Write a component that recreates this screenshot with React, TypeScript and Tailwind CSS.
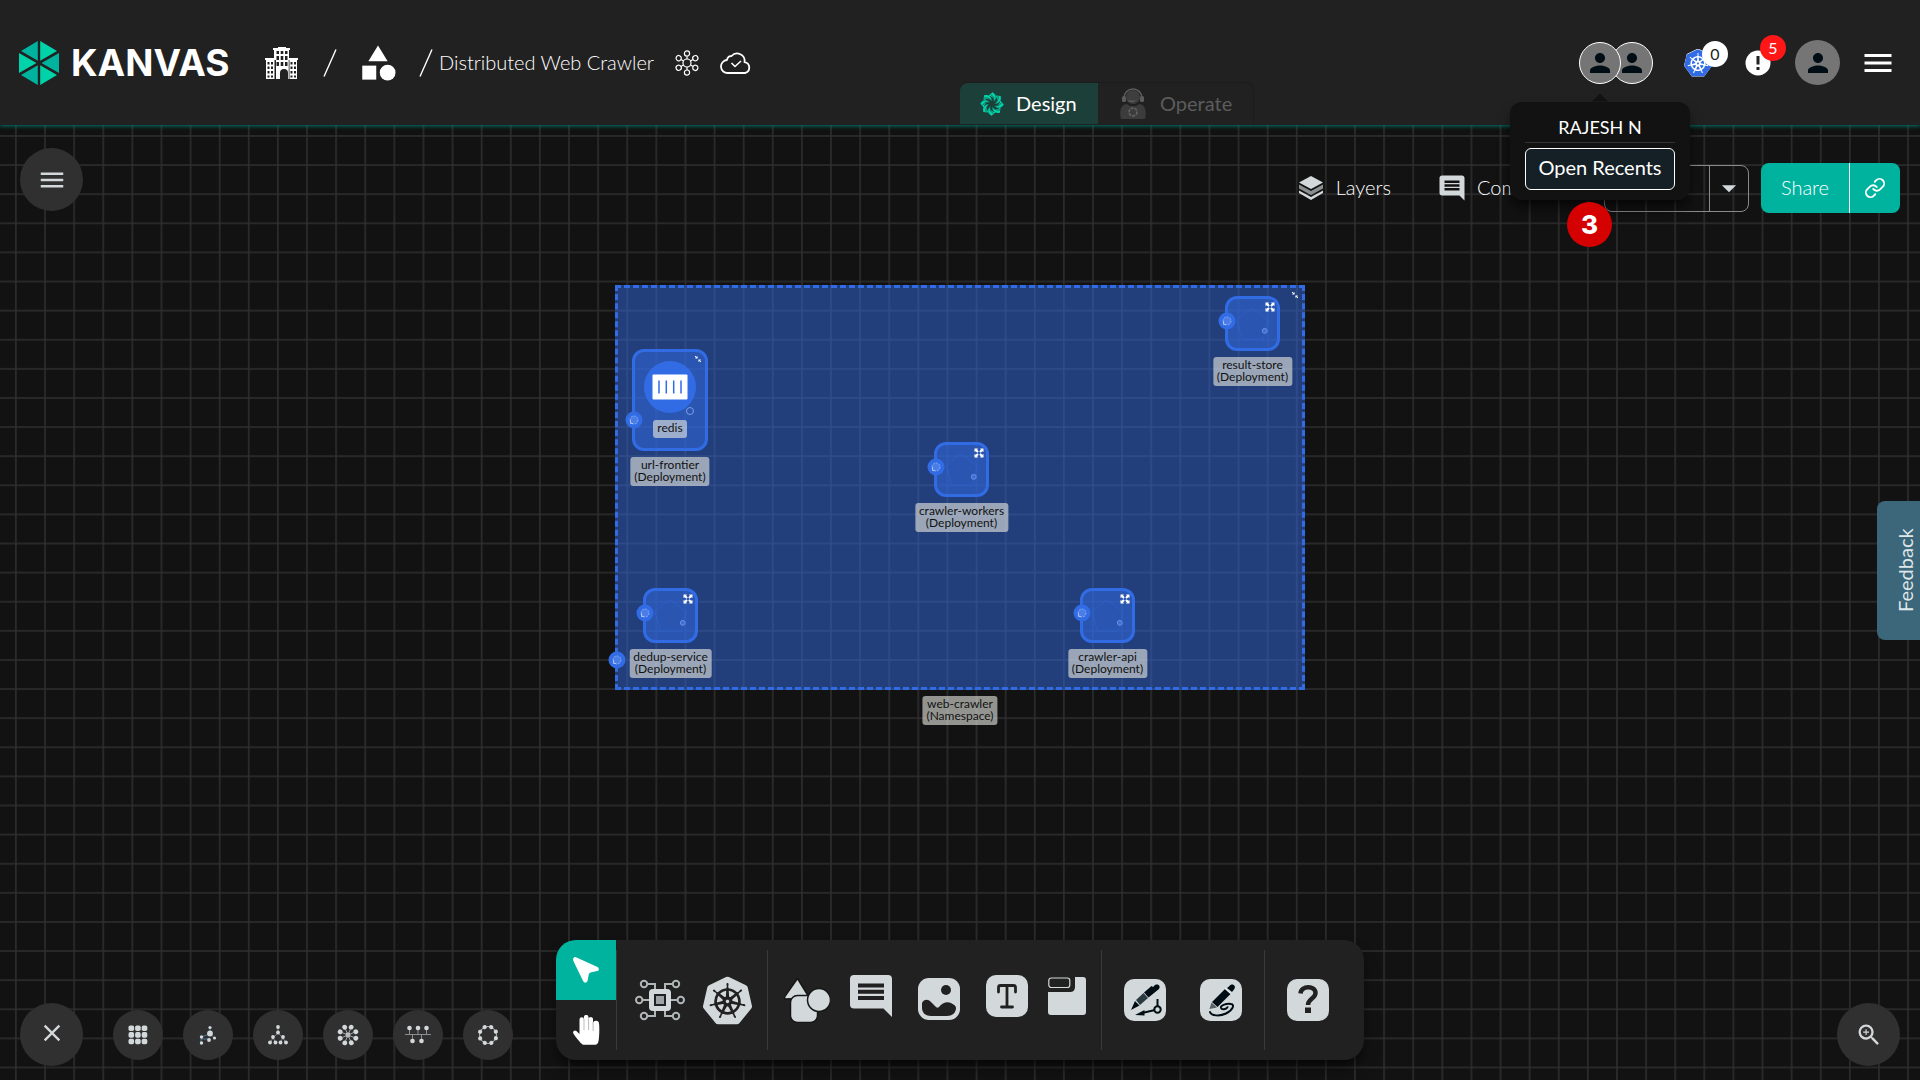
import type { ReactNode } from 'react';
import {
  MdArrowDropDown,
  MdCategory,
  MdClose,
  MdInsertComment,
  MdMenu,
  MdPerson,
  MdZoomIn,
} from 'react-icons/md';
import { SiKubernetes } from 'react-icons/si';
import { Link } from 'lucide-react';

interface DesignNode {
  name: string;
  left: number;
  top: number;
}

// positions are relative to the namespace box
const deployments: DesignNode[] = [
  { name: 'result-store', left: 610, top: 11 },
  { name: 'crawler-workers', left: 319, top: 157 },
  { name: 'dedup-service', left: 28, top: 303 },
  { name: 'crawler-api', left: 465, top: 303 },
];

const KanvasMark = () => (
  <svg viewBox="0 0 40 44" className="w-10 h-11" aria-hidden="true">
    <path fill="#00b39f" d="M18.8 0 2 10l16.800 9.700zM40 12v20L22.500 22zM18.800 44 2 34l16.800-9.700z" />
    <path fill="#00d3a9" d="M21.200 0 38 10l-16.800 9.700zM0 12v20l17.500-10zM21.200 44 38 34l-16.800-9.700z" />
  </svg>
);

const BuildingIcon = () => (
  <svg viewBox="0 0 36 34" className="w-9 h-[34px]" aria-hidden="true">
    <path
      fill="#fff"
      fillRule="evenodd"
      d="M14 1h8v1h4v2h-1v8h9v2h-1v19h-9v-6a3 3 0 0 0-8 0v6h-4V14H1v-2h9V4H9V2h5zM12.500 5v3h2.500V5zm4.200 0v3h2.600V5zm4.300 0v3h2.500V5zM12.500 10v4h2.500v-4zm4.200 0v4h2.600v-4zm4.300 0v4h2.500v-4zM12.500 16v4h2.500v-4zm4.200 0v4h2.600v-4zm4.300 0v4h2.500v-4z"
    />
    <path fill="#fff" fillRule="evenodd" d="M2 14h9v19H2zm1.500 2v2.500h2V16zm3.500 0v2.500h2V16zm-3.500 4.500V23h2v-2.500zm3.500 0V23h2v-2.500zM3.500 25v2.500h2V25zM7 25v2.500h2V25zm-3.500 4.500v2h2v-2zm3.500 0v2h2v-2z" />
    <path fill="#212121" d="M26.500 16h2v2.500h-2zm3.500 0h2v2.500h-2zm-3.500 4.500h2V23h-2zm3.500 0h2V23h-2zM26.500 25h2v2.500h-2zm3.500 0h2v2.500h-2zm-3.500 4.500h2v2h-2zm3.500 0h2v2h-2zM10.500 14h.8v19h-.8zM24.700 14h.8v19h-.8z" />
  </svg>
);

const Slash = () => (
  <svg viewBox="0 0 14 28" className="w-3.5 h-7" aria-hidden="true">
    <path d="M1 27.500 13 .5" stroke="#fff" strokeWidth="1.400" />
  </svg>
);

const hubAngles = [0, 60, 120, 180, 240, 300];

const HubIcon = () => (
  <svg viewBox="0 0 26 26" className="w-[26px] h-[26px]" fill="none" stroke="#fff" strokeWidth="1.200" aria-hidden="true">
    <circle cx="13" cy="13" r="4" />
    {hubAngles.map((a) => (
      <g key={a} transform={`rotate(${a} 13 13)`}>
        <circle cx="13" cy="3.400" r="2.600" />
        <path d="M13 6v3" />
      </g>
    ))}
  </svg>
);

const CloudCheckIcon = () => (
  <svg viewBox="0 0 32 22" className="w-8 h-[22px]" fill="none" stroke="#fff" strokeWidth="1.800" strokeLinejoin="round" aria-hidden="true">
    <path d="M8 21a6.500 6.500 0 0 1-1-13 5 5 0 0 1 2-3.500C10 4 10.500 4 11.500 4a7.500 7.500 0 0 1 13 6.200A5.500 5.500 0 0 1 25 21z" />
    <path d="m11.500 11 3.500 3.500L21 9" strokeWidth="1.600" />
  </svg>
);

const bladeAngles = [0, 45, 90, 135, 180, 225, 270, 315];

const SwirlIcon = () => (
  <svg viewBox="0 0 24 24" className="w-6 h-6" aria-hidden="true">
    {bladeAngles.map((a) => (
      <g key={a} transform={`rotate(${a} 12 12)`}>
        <path fill="#00d3a9" d="M13.500 10C14.500 7 13 4.500 8.500 3.500L12.500.3C16.500 2.500 17 7 13.500 10z" />
        <path fill="none" stroke="#1d3f3a" strokeWidth=".7" d="M12 12C15 9 14.500 5 10.500 2.200" />
      </g>
    ))}
  </svg>
);

const OperatorIcon = () => (
  <svg viewBox="0 0 26 32" className="w-[26px] h-8" aria-hidden="true">
    <path d="M4 10a9 9 0 0 1 18 0" fill="none" stroke="#5c5c5c" strokeWidth="1.500" />
    <circle cx="13" cy="9" r="7" fill="#3e3e3e" />
    <rect x="2" y="8" width="4" height="6" rx="1.500" fill="#5c5c5c" />
    <rect x="20" y="8" width="4" height="6" rx="1.500" fill="#5c5c5c" />
    <path d="M7 12.500h9a7 7 0 0 1-9 0z" fill="#5c5c5c" />
    <path d="M1 31c-2-8 0-15 6-15 3 3 9 3 12 0 6 0 8 7 6 15z" fill="#3c3c3c" />
    <circle cx="13" cy="24" r="4" fill="none" stroke="#666" strokeWidth="1.500" strokeDasharray="3 1" />
  </svg>
);

const AlertIcon = () => (
  <svg viewBox="0 0 26 26" className="w-[26px] h-[26px]" aria-hidden="true">
    <circle cx="13" cy="13" r="12.500" fill="#fff" />
    <path d="M11.500 6h3v8.500h-3zM11.500 17h3v3h-3z" fill="#212121" />
  </svg>
);

const LayersIcon = () => (
  <svg viewBox="0 0 26 26" className="w-[26px] h-[26px]" aria-hidden="true">
    <path fill="#d3d9db" d="m13 1 12 6.500-12 6.500L1 7.500z" />
    <path fill="#8b8f91" d="M1 9.500 13 16l12-6.500v4L13 20 1 13.500z" />
    <path fill="#d3d9db" d="M1 15.500 13 22l12-6.500V18l-12 7-12-7z" />
  </svg>
);

const CursorIcon = () => (
  <svg viewBox="0 0 26 26" className="w-[26px] h-[26px]" aria-hidden="true">
    <path fill="#fff" d="M3.500.4 24 9.800c2.500 1.200 2.400 3.800-.1 4.300l-6.200 1.300c-1 .2-1.700.9-1.900 1.800l-1.200 6.300c-.6 2.600-3.300 3-4.500.5L.5 4.300C-.7 1.500 1-.7 3.500.4z" />
  </svg>
);

const HandIcon = () => (
  <svg viewBox="0 0 27 30" className="w-[27px] h-[30px]" aria-hidden="true">
    <path
      fill="#fff"
      d="M6.500 19V4.500a2.200 2.200 0 0 1 4.400 0V2.200a2.300 2.300 0 0 1 4.600 0v1.500a2.300 2.300 0 0 1 4.500 0V9a2.700 2.700 0 0 1 6-.3c.5 1.500.5 15-.8 18.500-.5 1.500-1.400 2.500-3 2.500H10.500C8.500 29.700 3 22.500.4 18.500c-1.200-2 1.200-4 3-2.500z"
    />
    <path stroke="#bbb" strokeWidth="1" d="M11 4v11M15.600 4v11M20.100 7v9" />
  </svg>
);

const CircuitIcon = () => (
  <svg viewBox="0 0 50 42" className="w-[50px] h-[42px]" fill="none" aria-hidden="true">
    <g stroke="#b1b6b8" strokeWidth="2">
      <path d="M20 10V5h-7.500M30 10V5h7.500M20 32v5h-7.500M30 32v5h7.500M14 21H7M36 21h7" />
      <circle cx="9" cy="5" r="3.200" />
      <circle cx="41" cy="5" r="3.200" />
      <circle cx="9" cy="37" r="3.200" />
      <circle cx="41" cy="37" r="3.200" />
      <circle cx="4.200" cy="21" r="3.200" />
      <circle cx="45.800" cy="21" r="3.200" />
    </g>
    <rect x="14" y="10" width="22" height="22" rx="4" fill="#d3d9db" />
    <rect x="20" y="16" width="10" height="10" fill="#9fa3a5" stroke="#212121" strokeWidth="2" />
  </svg>
);

const ShapesIcon = () => (
  <svg viewBox="0 0 46 46" className="w-[46px] h-[46px]" fill="#d3d9db" stroke="#161616" strokeWidth="1.500" aria-hidden="true">
    <path d="M13.500 1.500 25.500 21l-24 1c-2-1-.5-2.500 0-3.500z" strokeLinejoin="round" />
    <rect x="6.500" y="18.500" width="27" height="27" rx="7" />
    <circle cx="35" cy="23" r="11.500" />
  </svg>
);

const CommentIcon = () => (
  <svg viewBox="0 0 42 42" className="w-[42px] h-[42px]" aria-hidden="true">
    <path fill="#d3d9db" d="M4 0h34a4 4 0 0 1 4 4v38l-8.500-8.500H4a4 4 0 0 1-4-4V4a4 4 0 0 1 4-4z" />
    <path fill="#212121" d="M8 8.500h26v4H8zM8 14.800h26v4H8zM8 21h26v4H8z" />
  </svg>
);

const ImageIcon = () => (
  <svg viewBox="0 0 42 42" className="w-[42px] h-[42px]" aria-hidden="true">
    <rect width="42" height="42" rx="11" fill="#d3d9db" />
    <circle cx="28" cy="12" r="5" fill="#212121" />
    <path fill="#212121" d="M4 25c2-4 6-4 9-1l5 5c1 1 2 1 3 0 3-4 8-6 12-4 3 1.500 5 3 5 5 0 5-4 8-9 8H13c-5 0-9-3-9-8z" />
  </svg>
);

const TextIcon = () => (
  <svg viewBox="0 0 42 42" className="w-[42px] h-[42px]" aria-hidden="true">
    <rect width="42" height="42" rx="10" fill="#d3d9db" />
    <path d="M12.500 17v-4.500q0-2 2-2h13q2 0 2 2V17M21 11v21M15.500 32h11" fill="none" stroke="#212121" strokeWidth="2.800" strokeLinecap="round" />
  </svg>
);

const SectionIcon = () => (
  <svg viewBox="0 0 38 38" className="w-[38px] h-[38px]" aria-hidden="true">
    <path fill="#d3d9db" d="M27 0h8a3 3 0 0 1 3 3v32a3 3 0 0 1-3 3H3a3 3 0 0 1-3-3V15h22q5 0 5-5z" />
    <rect x=".8" y="1" width="21" height="9.500" rx="2.500" fill="#212121" stroke="#d3d9db" strokeWidth="1.200" />
  </svg>
);

const PenIcon = () => (
  <svg viewBox="0 0 42 42" className="w-[42px] h-[42px]" aria-hidden="true">
    <rect width="42" height="42" rx="10" fill="#d3d9db" />
    <path fill="#000d14" d="m7 31 4-9 4.500 4.500zM20 13.500 27.500 7l1.500 1 2-2c3-1.500 6 1 4 4L24.500 18.500z" />
    <path fill="#2b3a41" d="m12 21 7.500-7 4.500 5-8 7z" />
    <path fill="#000d14" d="m11 36 9.500-5v5.500z" />
    <path d="m18 34 12-2.700M33.500 20v7" stroke="#000d14" strokeWidth="2" />
    <circle cx="33.500" cy="30.500" r="3.200" fill="none" stroke="#000d14" strokeWidth="2" />
  </svg>
);

const PencilIcon = () => (
  <svg viewBox="0 0 42 42" className="w-[42px] h-[42px]" aria-hidden="true">
    <rect width="42" height="42" rx="10" fill="#d3d9db" />
    <path fill="#000d14" d="m12 23 13-13 5.500 5-13 13zM29 7.500c3-4.500 8-.5 5 3l-2 2.500-5-4z" />
    <path fill="#596165" d="m9.500 30 2-6.500 5.500 5z" />
    <path fill="none" stroke="#fff" strokeWidth="1" d="m25 9.500 5.500 5" />
    <path
      fill="none"
      stroke="#000d14"
      strokeWidth="2"
      strokeLinecap="round"
      d="M10 33c1 4 10 4.500 16 1.500 7-3.500 9-9 5-9.500-4-.8-11 1-10 4 .8 2 5 1.500 6.500-.8"
    />
  </svg>
);

const HelpIcon = () => (
  <svg viewBox="0 0 42 42" className="w-[42px] h-[42px]" aria-hidden="true">
    <rect width="42" height="42" rx="10" fill="#d3d9db" />
    <path d="M13.500 14.500C14 6.500 28.500 6 28.500 14c0 5.500-7.500 5.500-7.500 12" fill="none" stroke="#212121" strokeWidth="4.500" />
    <rect x="18" y="28.500" width="6" height="5.500" fill="#212121" />
  </svg>
);

const gridCells = [0, 1, 2, 3, 4, 5, 6, 7, 8];

const GridLayoutIcon = () => (
  <svg viewBox="0 0 20 20" className="w-5 h-5" fill="#d3d9db" aria-hidden="true">
    {gridCells.map((i) => (
      <rect key={i} x={0.5 + (i % 3) * 6.6} y={0.5 + Math.floor(i / 3) * 6.6} width="5.600" height="5.600" rx="1.800" />
    ))}
  </svg>
);

const TreeLayoutIcon = () => (
  <svg viewBox="0 0 20 20" className="w-5 h-5" fill="#d3d9db" aria-hidden="true">
    <path d="M10 2v6M10 8l-5 5-3 5M10 8l5 5 3 5M5 12l2.500 6M15 12l-2.500 6" stroke="#8a8f91" strokeWidth=".8" fill="none" />
    <circle cx="10" cy="2" r="1.900" />
    <circle cx="10" cy="7.500" r="1.900" />
    <circle cx="5" cy="12" r="1.900" />
    <circle cx="15" cy="12" r="1.900" />
    <circle cx="2" cy="17.500" r="1.900" />
    <circle cx="7.500" cy="17.500" r="1.900" />
    <circle cx="12.500" cy="17.500" r="1.900" />
    <circle cx="18" cy="17.500" r="1.900" />
  </svg>
);

const ForceLayoutIcon = () => (
  <svg viewBox="0 0 20 20" className="w-5 h-5" fill="#d3d9db" aria-hidden="true">
    <path d="M12 3v5l4 5M12 9l-9 3M3 17v-3h8" stroke="#477e96" strokeWidth=".9" fill="none" />
    <circle cx="12" cy="2.500" r="1.600" />
    <circle cx="12" cy="8.500" r="2.900" />
    <circle cx="3.500" cy="12" r="1.700" />
    <circle cx="11" cy="15" r="1.900" />
    <circle cx="16.500" cy="13" r="1.600" />
    <circle cx="3.500" cy="18" r="1.700" />
  </svg>
);

const ringAngles = [22, 67, 112, 157, 202, 247, 292, 337];

const RingLayoutIcon = ({ hub }: { hub?: boolean }) => (
  <svg viewBox="0 0 22 22" className="w-[22px] h-[22px]" fill="#d3d9db" aria-hidden="true">
    {!hub && <circle cx="11" cy="11" r="8.500" fill="none" stroke="#d3d9db" strokeWidth=".8" />}
    {hub && <circle cx="11" cy="11" r="2.400" />}
    {ringAngles.map((a) => (
      <g key={a} transform={`rotate(${a} 11 11)`}>
        {hub && <path d="M11 11V3" stroke="#b0b5b7" strokeWidth=".8" />}
        <circle cx="11" cy="2.500" r={hub ? 2.4 : 2.1} />
      </g>
    ))}
  </svg>
);

const TimelineLayoutIcon = () => (
  <svg viewBox="0 0 26 20" className="w-[26px] h-5" fill="#d3d9db" aria-hidden="true">
    <path d="M0 9.500h26M4.500 3v6.500M13 3v6.500M21.500 3v6.500M7.500 9.500V16M16.500 9.500V16" stroke="#a0a5a7" strokeWidth=".8" />
    <circle cx="4.500" cy="3" r="2.300" />
    <circle cx="13" cy="3" r="2.300" />
    <circle cx="21.500" cy="3" r="2.300" />
    <circle cx="7.500" cy="16" r="2.300" />
    <circle cx="16.500" cy="16" r="2.300" />
  </svg>
);

const GridBackground = () => (
  <svg className="absolute inset-0 w-full h-full" aria-hidden="true">
    <defs>
      <pattern id="grid" x="15" y="10" width="29.110" height="29.110" patternUnits="userSpaceOnUse">
        <path d="M.9 0v29.110M0 .9h29.110" stroke="#2f2f2f" strokeWidth="1.500" />
      </pattern>
    </defs>
    <rect width="100%" height="100%" fill="url(#grid)" />
  </svg>
);

const cornerAngles = [0, 90, 180, 270];

const ExpandIcon = () => (
  <svg viewBox="0 0 10 10" className="absolute top-1.5 right-[5px] w-2.5 h-2.5" fill="#fff" aria-hidden="true">
    {cornerAngles.map((a) => (
      <path key={a} transform={`rotate(${a} 5 5)`} d="M.5.5h3.500L3.200 1.600 4.700 3.400 3.400 4.700 1.600 3.200.5 4z" />
    ))}
  </svg>
);

const CollapseIcon = ({ className }: { className: string }) => (
  <svg viewBox="0 0 8 8" className={className} fill="#fff" aria-hidden="true">
    <path d="M3.600 3.600H1l.9-.9L.8 1.600l.8-.8 1.100 1.100.9-.9zM4.400 4.400H7l-.9.9 1.100 1.100-.8.8-1.100-1.100-.9.9z" />
  </svg>
);

const Port = ({ className }: { className: string }) => (
  <svg viewBox="0 0 18 18" className={className} aria-hidden="true">
    <circle cx="9" cy="9" r="8.500" fill="#326ce5" />
    <circle cx="9" cy="9" r="4" fill="#4b7de8" stroke="#86a7f0" strokeWidth="1" strokeDasharray="2 1" />
    <path d="M5.500 9v3.500h2.500" fill="none" stroke="#a9c0f5" strokeWidth="1" />
  </svg>
);

const NodeLabel = ({ name, kind }: { name: string; kind: string }) => (
  <div className="absolute top-full left-1/2 -translate-x-1/2 mt-1.5 px-1 pt-0.5 pb-[3px] rounded-[3px] bg-[#e4e5dd]/62 text-center text-xs leading-3 text-[#111] whitespace-nowrap">
    {name}
    <br />({kind})
  </div>
);

const DeploymentNode = ({ name, left, top }: DesignNode) => (
  <div className="absolute w-[55px] h-[55px]" style={{ left, top }}>
    <div className="w-full h-full rounded-xl border-3 border-[#326ce5] bg-[#326ce5]/50">
      <svg viewBox="0 0 50 50" className="w-full h-full" fill="none" aria-hidden="true">
        <path d="m24 9 17 12-5 20H15L9 21z" stroke="#326ce5" strokeOpacity=".45" strokeWidth=".8" />
        <circle cx="37.500" cy="32.500" r="2.500" fill="#3f6fd6" stroke="#6a90e6" strokeWidth="1" />
      </svg>
    </div>
    <ExpandIcon />
    <Port className="absolute -left-[7px] top-4 w-[18px] h-[18px]" />
    <NodeLabel name={name} kind="Deployment" />
  </div>
);

const Avatar = ({ className }: { className: string }) => (
  <span className={`flex items-center justify-center rounded-full bg-[#757575] text-[#000d14] ${className}`}>
    <MdPerson className="w-[30px] h-[30px]" />
  </span>
);

const CircleButton = ({ label, small, children }: { label: string; small?: boolean; children: ReactNode }) => (
  <button
    aria-label={label}
    className={`flex items-center justify-center shrink-0 rounded-full bg-[#303030] text-[#d3d9db] ${
      small ? 'w-[50px] h-[50px]' : 'w-[63px] h-[63px]'
    }`}
  >
    {children}
  </button>
);

const ToolButton = ({ label, children }: { label: string; children: ReactNode }) => (
  <button aria-label={label} className="flex items-center justify-center shrink-0">
    {children}
  </button>
);

const Header = () => (
  <header className="relative z-20 grid grid-cols-2 h-[125px] bg-[#212121] shadow-[0_1px_4px_0_#00796b]">
    <div className="flex items-center pl-[19px] text-white">
      <a href="#home" className="flex items-center gap-3">
        <KanvasMark />
        <span className="w-[158px] font-['Inter'] font-bold text-[37px] leading-none">KANVAS</span>
      </a>
      <a href="#organization" aria-label="Organization" className="ml-[35px]">
        <BuildingIcon />
      </a>
      <span className="ml-[23px]">
        <Slash />
      </span>
      <a href="#workspace" aria-label="Workspace" className="ml-[20px]">
        <MdCategory className="w-[42px] h-[42px]" />
      </a>
      <span className="ml-[20px]">
        <Slash />
      </span>
      <h1 className="ml-1.5 pb-0.5 font-light text-xl leading-6 whitespace-nowrap">Distributed Web Crawler</h1>
      <button aria-label="Visibility" className="ml-5">
        <HubIcon />
      </button>
      <button aria-label="Saved" className="ml-5">
        <CloudCheckIcon />
      </button>
    </div>

    <div className="flex items-center justify-between">
      <div className="flex self-end mb-px rounded-t-lg border-t border-r border-[#1c1c1c] text-xl leading-6">
        <button className="flex items-center gap-3 h-[41px] px-5 w-[138px] rounded-tl-lg bg-[#1d3f3a] text-white">
          <SwirlIcon />
          <span className="pb-0.5">Design</span>
        </button>
        <button className="flex items-center gap-3.5 h-[41px] pl-[22px] w-[155px] text-[#5c5c5c]">
          <OperatorIcon />
          <span className="pb-0.5">Operate</span>
        </button>
      </div>

      <div className="flex items-center pr-6">
        <div className="flex">
          <div className="relative z-10">
            <Avatar className="w-[42px] h-[42px] border border-white" />
            <UserTooltip />
          </div>
          <Avatar className="w-[42px] h-[42px] -ml-2.5 border border-white" />
        </div>
        <button aria-label="Kubernetes clusters" className="relative ml-[31px]">
          <SiKubernetes className="w-7 h-7 text-[#326ce5] bg-white [clip-path:polygon(50%_0,90%_20%,100%_62%,72%_100%,28%_100%,0_62%,10%_20%)]" />
          <span className="absolute -top-2 left-[18px] w-[26px] h-[26px] rounded-full bg-white text-[#222] text-base leading-[26px]">0</span>
        </button>
        <button aria-label="Notifications" className="relative ml-[33px]">
          <AlertIcon />
          <span className="absolute -top-[15px] left-[15px] w-[26px] h-[26px] rounded-full bg-[#ff1717] text-white text-base leading-[26px]">5</span>
        </button>
        <Avatar className="w-[45px] h-[45px] ml-6" />
        <button aria-label="Menu" className="ml-5 text-white">
          <MdMenu className="w-9 h-9" />
        </button>
      </div>
    </div>
  </header>
);

const UserTooltip = () => (
  <div className="absolute top-[60px] left-1/2 -translate-x-1/2 w-[180px] h-[98px] px-[15px] pt-[13px] rounded-xl bg-[#121212] shadow-lg shadow-black/60">
    <span className="absolute -top-2 left-1/2 -translate-x-1/2 w-4 h-2 bg-[#121212] [clip-path:polygon(50%_0,100%_100%,0_100%)]" />
    <p className="pb-[3px] border-b border-[#333] text-center text-lg leading-6 text-white">RAJESH N</p>
    <button className="w-full h-[42px] mt-[5px] pb-1 rounded-md border border-white bg-[#152026] text-xl leading-6 text-white whitespace-nowrap">
      Open Recents
    </button>
    <span className="absolute top-full left-[57px] mt-0.5 w-[45px] h-[45px] rounded-full bg-[#d50000] text-center font-['Inter'] font-extrabold text-[26px] leading-[45px] text-white">
      3
    </span>
  </div>
);

const CanvasActions = () => (
  <div className="flex items-center pt-[15px] font-light text-xl leading-6 text-white">
    <button className="flex items-center gap-3">
      <LayersIcon />
      <span className="pb-0.5">Layers</span>
    </button>
    <button className="flex items-center gap-2.5 w-[160px] ml-[46px]">
      <MdInsertComment className="w-[30px] h-[30px] text-[#d3d9db]" />
      <span className="pb-0.5">Comments</span>
    </button>
    <div className="flex h-[47px] ml-[7px] rounded-lg border border-[#8a8a8a]">
      <button className="w-[104px] pb-0.5">Actions</button>
      <button aria-label="More actions" className="flex items-center justify-center w-[39px] border-l border-[#8a8a8a] text-[#d3d9db]">
        <MdArrowDropDown className="w-[34px] h-[34px] shrink-0" />
      </button>
    </div>
    <div className="flex h-[50px] ml-3 rounded-lg bg-[#00b39f]">
      <button className="w-[88px] pb-0.5">Share</button>
      <button aria-label="Copy link" className="flex items-center justify-center w-[51px] border-l border-white">
        <Link className="w-[22px] h-[22px]" />
      </button>
    </div>
  </div>
);

const NamespaceDiagram = () => (
  <div className="absolute left-1/2 top-[160px] -translate-x-1/2 w-[690px] h-[405px]">
    <div className="w-full h-full border-3 border-dashed border-[#326ce5] bg-[#326ce5]/50" />
    <CollapseIcon className="absolute top-1.5 right-1.5 w-2 h-2" />
    <Port className="absolute -left-[7px] top-[366px] w-[18px] h-[18px]" />

    <div className="absolute left-[17px] top-[64px] w-[76px] h-[102px]">
      <div className="flex flex-col items-center gap-[7px] w-full h-full pt-[9px] rounded-xl border-3 border-[#326ce5] bg-[#326ce5]/50">
        <svg viewBox="0 0 52 52" className="w-[52px] h-[52px] shrink-0" aria-hidden="true">
          <circle cx="26" cy="26" r="26" fill="#326ce5" />
          <rect x="8.500" y="13.500" width="35" height="25" rx="1" fill="#fff" />
          <path d="M15 19.500v13M22.300 19.500v13M29.700 19.500v13M37 19.500v13" stroke="#326ce5" strokeWidth="1.500" />
        </svg>
        <span className="px-1 pt-0.5 pb-1 rounded-[3px] bg-[#e4e5dd]/62 text-xs leading-3 text-[#111]">redis</span>
      </div>
      <svg viewBox="0 0 12 12" className="absolute right-3 top-14 w-3 h-3" aria-hidden="true">
        <circle cx="6" cy="6" r="3.500" fill="none" stroke="#7c9ee8" strokeWidth="1" />
      </svg>
      <CollapseIcon className="absolute top-1.5 right-1.5 w-2 h-2" />
      <Port className="absolute -left-[7px] top-[62px] w-[18px] h-[18px]" />
      <NodeLabel name="url-frontier" kind="Deployment" />
    </div>

    {deployments.map((node) => (
      <DeploymentNode key={node.name} {...node} />
    ))}
    <NodeLabel name="web-crawler" kind="Namespace" />
  </div>
);

const Toolbar = () => (
  <div className="flex h-[120px] mb-1.5 rounded-[20px] overflow-hidden bg-[#212121] shadow-lg shadow-black/50">
    <div className="flex flex-col w-[60px]">
      <button aria-label="Select" className="flex items-center justify-center h-[60px] bg-[#00b39f]">
        <CursorIcon />
      </button>
      <button aria-label="Pan" className="flex items-center justify-center h-[60px]">
        <HandIcon />
      </button>
    </div>
    <div className="flex items-center gap-[18px] my-2.5 pl-[18px] pr-[15px] border-l border-[#3a3a3a]">
      <ToolButton label="Components">
        <CircuitIcon />
      </ToolButton>
      <ToolButton label="Kubernetes">
        <SiKubernetes className="w-[49px] h-[49px] text-[#d3d9db]" />
      </ToolButton>
    </div>
    <div className="flex items-center gap-5 my-2.5 pl-[16px] pr-[15px] border-l border-[#3a3a3a]">
      <ToolButton label="Shapes">
        <ShapesIcon />
      </ToolButton>
      <div className="flex items-center gap-[26px] pb-2">
        <ToolButton label="Comment">
          <CommentIcon />
        </ToolButton>
        <div className="pt-1.5">
          <ToolButton label="Image">
            <ImageIcon />
          </ToolButton>
        </div>
        <ToolButton label="Text">
          <TextIcon />
        </ToolButton>
      </div>
      <div className="pb-2">
        <ToolButton label="Section">
          <SectionIcon />
        </ToolButton>
      </div>
    </div>
    <div className="flex items-center gap-[34px] my-2.5 px-[22px] border-l border-[#3a3a3a]">
      <ToolButton label="Pen">
        <PenIcon />
      </ToolButton>
      <ToolButton label="Pencil">
        <PencilIcon />
      </ToolButton>
    </div>
    <div className="flex items-center my-2.5 pl-[22px] pr-[35px] border-l border-[#3a3a3a]">
      <ToolButton label="Help">
        <HelpIcon />
      </ToolButton>
    </div>
  </div>
);

const App = () => {
  return (
    <div className="flex flex-col min-h-screen bg-[#121212] font-['Lato',sans-serif]">
      <Header />
      <main className="relative flex flex-col flex-1 justify-between min-h-[800px] overflow-hidden">
        <GridBackground />
        <NamespaceDiagram />

        <div className="relative flex items-start justify-between pl-5 pr-5 pt-[23px]">
          <CircleButton label="Open menu">
            <MdMenu className="w-[30px] h-[30px]" />
          </CircleButton>
          <CanvasActions />
        </div>

        <button className="absolute right-0 top-[376px] w-[43px] h-[139px] pl-4 rounded-l-lg bg-[#3c6679] text-xl leading-6 text-[#dfe6e9]">
          <span className="block rotate-180 [writing-mode:vertical-rl] w-6 h-full text-center">Feedback</span>
        </button>

        <div className="relative grid grid-cols-[1fr_auto_1fr] items-end px-5 pb-3.5">
          <div className="flex items-center gap-5">
            <div className="mr-2.5">
              <CircleButton label="Close layouts">
                <MdClose className="w-7 h-7 mb-1" />
              </CircleButton>
            </div>
            <CircleButton label="Grid layout" small>
              <GridLayoutIcon />
            </CircleButton>
            <CircleButton label="Force layout" small>
              <ForceLayoutIcon />
            </CircleButton>
            <CircleButton label="Tree layout" small>
              <TreeLayoutIcon />
            </CircleButton>
            <CircleButton label="Concentric layout" small>
              <RingLayoutIcon hub />
            </CircleButton>
            <CircleButton label="Timeline layout" small>
              <TimelineLayoutIcon />
            </CircleButton>
            <CircleButton label="Circle layout" small>
              <RingLayoutIcon />
            </CircleButton>
          </div>
          <Toolbar />
          <div className="flex justify-end">
            <CircleButton label="Zoom in">
              <MdZoomIn className="w-7 h-7" />
            </CircleButton>
          </div>
        </div>
      </main>
    </div>
  );
};

export default App;
